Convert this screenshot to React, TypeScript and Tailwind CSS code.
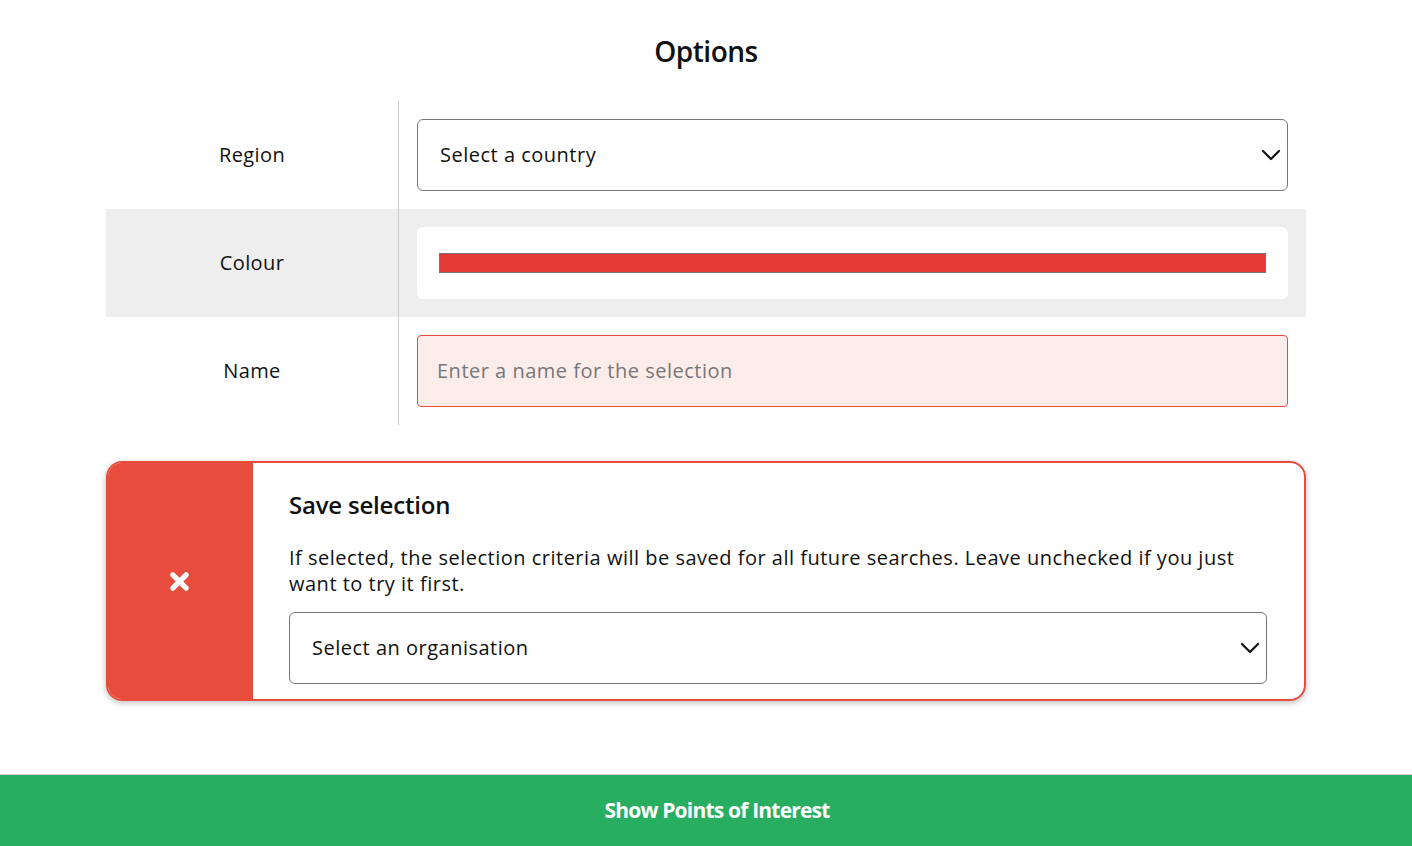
import React from "react";

const Chevron = () => (
  <svg width="20" height="12" viewBox="0 0 20 12" fill="none" stroke="#111" strokeWidth="2.2" strokeLinecap="round" strokeLinejoin="round">
    <path d="M2 2l8 8 8-8" />
  </svg>
);

export default function App() {
  const font = { fontFamily: '"Open Sans", "Noto Sans", sans-serif' };
  return (
    <div className="min-h-[846px] w-full bg-white flex flex-col text-[#111]" style={font}>
      <h1 className="text-center text-[28px] font-semibold leading-none pt-[37px] pb-[36px] tracking-[-0.5px]">Options</h1>
      <div className="mx-[106px] flex flex-col">
        <div className="flex h-[108px]">
          <div className="w-[293px] border-r border-[#cccccc] flex items-center justify-center text-[20px] tracking-[0.4px]">Region</div>
          <div className="flex-1 px-[18px] pt-[18px] pb-[18px]">
            <div className="h-[72px] rounded-[6px] border border-[#777] flex items-center justify-between pl-[22px] pr-[6px] text-[20px] tracking-[0.5px]">
              <span>Select a country</span>
              <Chevron />
            </div>
          </div>
        </div>
        <div className="flex h-[108px] bg-[#eeeeee]">
          <div className="w-[293px] border-r border-[#cccccc] flex items-center justify-center text-[20px] tracking-[0.4px]">Colour</div>
          <div className="flex-1 px-[18px] py-[18px]">
            <div className="h-[72px] rounded-[6px] bg-white flex items-center px-[22px]">
              <div className="h-[20px] w-full bg-[#e53935] border border-[#777]" />
            </div>
          </div>
        </div>
        <div className="flex h-[108px]">
          <div className="w-[293px] border-r border-[#cccccc] flex items-center justify-center text-[20px] tracking-[0.4px]">Name</div>
          <div className="flex-1 px-[18px] py-[18px]">
            <div className="h-[72px] rounded-[4px] border border-[#e74c3c] bg-[#fcecea] flex items-center px-[19px] text-[20px] text-[#777] tracking-[0.5px]">
              Enter a name for the selection
            </div>
          </div>
        </div>
      </div>
      <div className="mx-[106px] mt-[36px] flex rounded-[16px] border-2 border-[#e74c3c] overflow-hidden shadow-[0_2px_6px_rgba(0,0,0,0.25)]">
        <div className="w-[145px] bg-[#e74c3c] flex items-center justify-center pr-[2px]">
          <svg width="21" height="21" viewBox="0 0 22 22">
            <path d="M4 4L18 18M18 4L4 18" stroke="white" strokeWidth="5.5" strokeLinecap="round" />
          </svg>
        </div>
        <div className="flex-1 pl-[36px] pr-[37px] pt-[27px] pb-[15px]">
          <h2 className="text-[24px] font-semibold leading-[30px] tracking-[-0.2px]">Save selection</h2>
          <p className="text-[20px] leading-[26px] mt-[25px] tracking-[0.5px]">If selected, the selection criteria will be saved for all future searches. Leave unchecked if you just want to try it first.</p>
          <div className="mt-[15px] h-[72px] rounded-[6px] border border-[#777] flex items-center justify-between pl-[22px] pr-[6px] text-[20px] tracking-[0.5px]">
            <span>Select an organisation</span>
            <Chevron />
          </div>
        </div>
      </div>
      <div className="mt-[73px] h-[72px] bg-[#27ae60] border-t border-[#d0d0d0] flex items-center justify-center pl-[22px] text-white text-[21px] font-bold tracking-[-0.8px]">
        Show Points of Interest
      </div>
    </div>
  );
}
